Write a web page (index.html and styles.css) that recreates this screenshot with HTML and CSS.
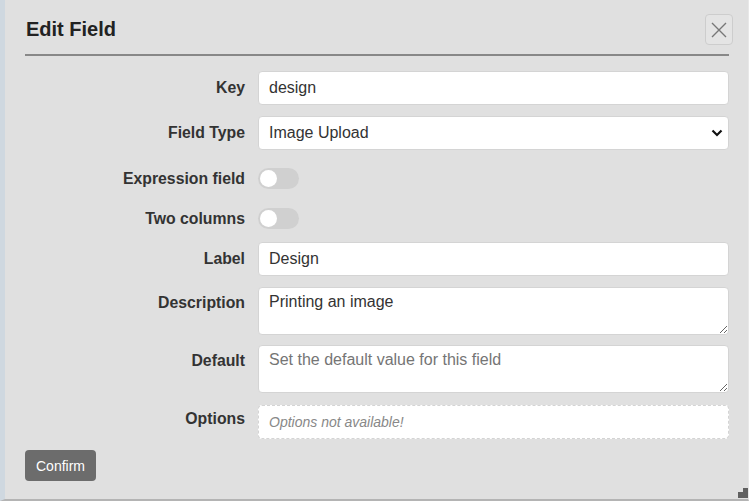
FILE: index.html
```html
<!DOCTYPE html>
<html>
<head>
<meta charset="utf-8">
<link rel="stylesheet" href="styles.css">
</head>
<body>
<div class="dialog">
  <div class="header">
    <h1 class="title">Edit Field</h1>
    <button class="close" aria-label="Close">
      <svg width="18" height="18" viewBox="0 0 18 18"><path d="M2 2 L16 16 M16 2 L2 16" stroke="#777" stroke-width="1.4" fill="none"/></svg>
    </button>
  </div>
  <form class="form">
    <div class="row">
      <label class="lbl">Key</label>
      <input class="ctl" type="text" value="design">
    </div>
    <div class="row">
      <label class="lbl">Field Type</label>
      <div class="select">
        <span>Image Upload</span>
        <svg width="12" height="8" viewBox="0 0 12 8"><path d="M1.5 1.5 L6 6 L10.5 1.5" stroke="#111" stroke-width="2.2" fill="none"/></svg>
      </div>
    </div>
    <div class="row toggle-row first">
      <label class="lbl">Expression field</label>
      <span class="toggle"><span class="knob"></span></span>
    </div>
    <div class="row toggle-row second">
      <label class="lbl">Two columns</label>
      <span class="toggle"><span class="knob"></span></span>
    </div>
    <div class="row">
      <label class="lbl">Label</label>
      <input class="ctl" type="text" value="Design">
    </div>
    <div class="row area-row">
      <label class="lbl">Description</label>
      <textarea class="ctl area">Printing an image</textarea>
    </div>
    <div class="row area-row">
      <label class="lbl">Default</label>
      <textarea class="ctl area" placeholder="Set the default value for this field"></textarea>
    </div>
    <div class="row options-row">
      <label class="lbl">Options</label>
      <div class="options">Options not available!</div>
    </div>
    <button type="button" class="confirm">Confirm</button>
  </form>
  <svg class="grip" width="10" height="10" viewBox="0 0 10 10"><path d="M5 0 H10 V10 H0 V4 H5 Z" fill="#606060"/></svg>
</div>
</body>
</html>
```

FILE: styles.css
```css
html, body {
  margin: 0;
  padding: 0;
  height: 501px;
  overflow: hidden;
  background: #e0e0e0;
  font-family: "Liberation Sans", Arial, sans-serif;
}

.dialog {
  position: relative;
  box-sizing: border-box;
  height: 501px;
  border-left: 5px solid #cfd8e0;
  border-bottom: 2px solid #b4b4b4;
  border-right: 1px solid #e8e8e8;
  padding: 0 19px 0 20px;
  background: #e0e0e0;
}

.header {
  display: flex;
  align-items: center;
  justify-content: space-between;
  height: 54px;
  border-bottom: 2px solid #888;
}

.title {
  margin: 4px 0 0 1px;
  font-size: 20px;
  font-weight: bold;
  color: #222;
}

.close {
  width: 28px;
  height: 31px;
  margin: 5px -4px 0 0;
  padding: 0;
  display: flex;
  align-items: center;
  justify-content: center;
  background: #e4e4e4;
  border: 1px solid #cdcdcd;
  border-radius: 4px;
}

.form {
  display: flex;
  flex-direction: column;
  padding-top: 15px;
}

.row {
  display: flex;
  align-items: center;
  margin-bottom: 11px;
}

.lbl {
  width: 220px;
  flex: none;
  margin-right: 13px;
  text-align: right;
  font-size: 15.8px;
  font-weight: bold;
  color: #333;
}

.ctl {
  box-sizing: border-box;
  width: 471px;
  height: 34px;
  margin: 0;
  padding: 0 10px;
  border: 1px solid #d4d4d4;
  border-radius: 4px;
  background: #fff;
  font-family: "Liberation Sans", Arial, sans-serif;
  font-size: 16px;
  color: #333;
  outline: none;
}

.select {
  box-sizing: border-box;
  width: 471px;
  height: 34px;
  padding: 0 5px 0 10px;
  display: flex;
  align-items: center;
  justify-content: space-between;
  border: 1px solid #d4d4d4;
  border-radius: 4px;
  background: #fff;
  font-size: 16px;
  color: #333;
}

.toggle-row {
  height: 31px;
  margin-bottom: 9px;
}

.toggle-row.first {
  margin-top: 2px;
}

.toggle-row.second {
  margin-bottom: 8px;
}

.toggle {
  box-sizing: border-box;
  width: 41px;
  height: 21px;
  border-radius: 11px;
  background: #d0d0d0;
  padding: 2px;
  display: flex;
}

.knob {
  width: 17px;
  height: 17px;
  border-radius: 50%;
  background: #fff;
}

.area-row {
  align-items: flex-start;
  margin-bottom: 10px;
}

.area-row .lbl {
  padding-top: 7px;
}

.area {
  height: 48px;
  padding: 5px 10px;
  resize: vertical;
  line-height: 18px;
}

.area::placeholder {
  color: #757575;
}

.options-row {
  margin-top: 2px;
  align-items: flex-start;
}

.options-row .lbl {
  padding-top: 5px;
}

.options {
  box-sizing: border-box;
  width: 471px;
  height: 34px;
  padding: 0 10px;
  display: flex;
  align-items: center;
  border: 1px dashed #d4d4d4;
  border-radius: 4px;
  background: #fff;
  font-size: 14px;
  font-style: italic;
  color: #888;
}

.confirm {
  align-self: flex-start;
  width: 71px;
  height: 31px;
  padding: 0;
  border: none;
  border-radius: 4px;
  background: #6c6c6c;
  color: #fff;
  font-family: "Liberation Sans", Arial, sans-serif;
  font-size: 14px;
}

.grip {
  position: absolute;
  right: 0;
  bottom: 1px;
}
```
